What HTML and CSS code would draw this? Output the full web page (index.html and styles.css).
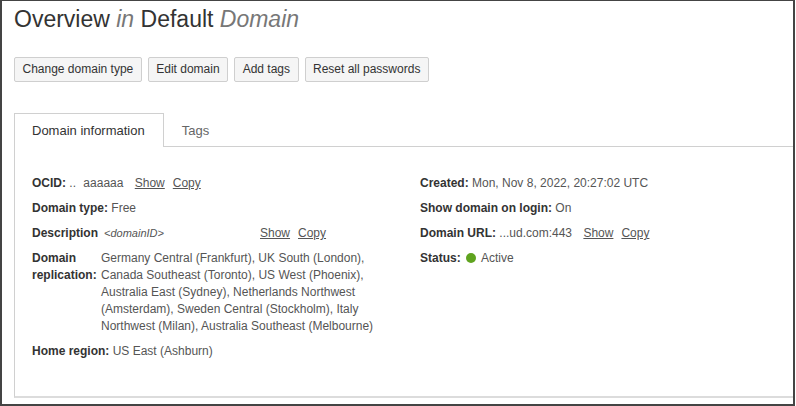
FILE: index.html
```html
<!DOCTYPE html>
<html>
<head>
    <meta charset="utf-8">
    <title>Overview in Default Domain</title>
    <link rel="stylesheet" href="styles.css">
</head>
<body>
<div class="frame">
    <h1 class="title">Overview <em>in</em> Default <em>Domain</em></h1>

    <div class="actions">
        <button>Change domain type</button>
        <button>Edit domain</button>
        <button>Add tags</button>
        <button>Reset all passwords</button>
    </div>

    <div class="tabs">
        <div class="tab active">Domain information</div>
        <div class="tab">Tags</div>
    </div>

    <div class="panel">
        <div class="info">
            <div class="col">
                <div class="row">
                    <b>OCID:</b> <span class="dots">..</span> <span class="val">aaaaaa</span>
                    <a href="#">Show</a><a href="#">Copy</a>
                </div>
                <div class="row"><b>Domain type:</b> Free</div>
                <div class="row pair">
                    <b class="label">Description</b>
                    <span class="value desc"><i>&lt;domainID&gt;</i></span>
                    <a href="#" class="first">Show</a><a href="#">Copy</a>
                </div>
                <div class="row pair">
                    <b class="label">Domain replication:</b>
                    <span class="value regions">Germany Central (Frankfurt), UK South (London), Canada Southeast (Toronto), US West (Phoenix), Australia East (Sydney), Netherlands Northwest (Amsterdam), Sweden Central (Stockholm), Italy Northwest (Milan), Australia Southeast (Melbourne)</span>
                </div>
                <div class="row"><b>Home region:</b> US East (Ashburn)</div>
            </div>
            <div class="col">
                <div class="row"><b>Created:</b> Mon, Nov 8, 2022, 20:27:02 UTC</div>
                <div class="row"><b>Show domain on login:</b> On</div>
                <div class="row">
                    <b>Domain URL:</b> ...ud.com:443
                    <a href="#">Show</a><a href="#">Copy</a>
                </div>
                <div class="row"><b>Status:</b> <span class="dot"></span>Active</div>
            </div>
        </div>
    </div>
</div>
</body>
</html>
```

FILE: styles.css
```css
body {
    margin: 0;
    background-color: #fff;
    font-family: "Liberation Sans", Arial, sans-serif;
    color: #555;
}

.frame {
    box-sizing: border-box;
    width: 795px;
    height: 406px;
    border: 2px solid #444;
    border-top-width: 1px;
    padding-left: 12px;
    display: flex;
    flex-direction: column;
}

.title {
    margin: 0;
    padding-top: 3px;
    font-size: 23px;
    line-height: 30px;
    font-weight: normal;
    color: #333;
}

.title em {
    color: #777;
}

/* action buttons */
.actions {
    display: flex;
    gap: 6px;
    margin-top: 23px;
}

.actions button {
    font-family: inherit;
    font-size: 12px;
    line-height: 15px;
    color: #333;
    background-color: #f5f5f5;
    border: 1px solid #cfcfcf;
    border-radius: 2px;
    padding: 4px 7.5px;
}

/* tabs */
.tabs {
    display: flex;
    margin-top: 31px;
    border-bottom: 1px solid #d0d0d0;
}

.tab {
    font-size: 13px;
    line-height: 15px;
    padding: 9px 18px 8px 17px;
    color: #666;
    border: 1px solid transparent;
    border-bottom: none;
}

.tab.active {
    color: #333;
    border-color: #d0d0d0;
    background-color: #fff;
    margin-bottom: -1px;
    padding-bottom: 9px;
}

.panel {
    flex: 1;
    margin-bottom: 6px;
    border-left: 1px solid #d0d0d0;
    border-bottom: 2px solid #dcdcdc;
    padding: 28px 0 0 17px;
}

.info {
    display: grid;
    grid-template-columns: 388px 1fr;
}

.col {
    display: flex;
    flex-direction: column;
    gap: 8px;
}

.row {
    font-size: 12px;
    line-height: 17px;
}

.row b {
    color: #333;
}

.row a {
    color: #555;
    margin-left: 8px;
}

.dots {
    margin-right: 4px;
}

.pair {
    display: flex;
    align-items: flex-start;
}

.pair .label {
    width: 69px;
    flex-shrink: 0;
}

.value.desc {
    width: 156px;
    margin-left: 3px;
    font-size: 11px;
}

.pair a.first {
    margin-left: 0;
}

.value.regions {
    width: 285px;
}

.dot {
    display: inline-block;
    width: 10px;
    height: 10px;
    border-radius: 50%;
    background-color: #5fa31f;
    vertical-align: -1px;
    margin: 0 5px 0 2px;
}
```
